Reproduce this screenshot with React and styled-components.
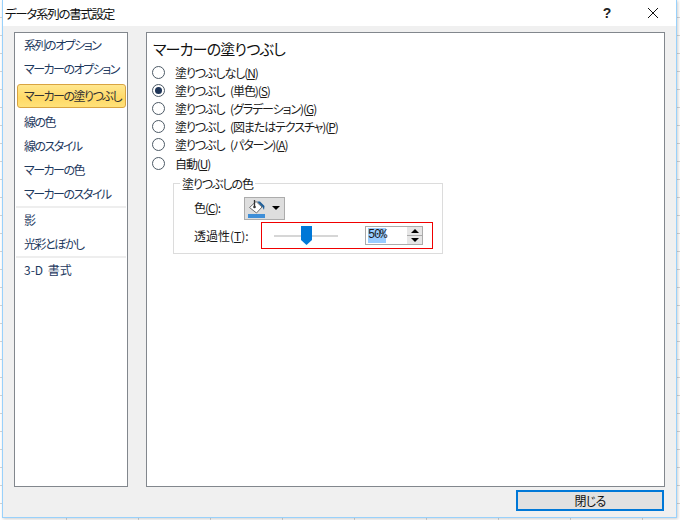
import React from 'react'
import styled, { createGlobalStyle } from 'styled-components'

const Global = createGlobalStyle`
    html, body { margin: 0; padding: 0; }
    body {
        width: 680px;
        height: 520px;
        overflow: hidden;
        font-family: "Noto Sans CJK JP", "Liberation Sans", sans-serif;
        font-size: 12px;
        font-feature-settings: "palt";
        color: #1a1a1a;
    }
    u { text-underline-offset: 1px; }
`

const Desktop = styled.div`
    width: 680px;
    height: 520px;
    box-sizing: border-box;
    padding: 0 3px 2px 2px;
    background-color: #fff;
    background-image:
        repeating-linear-gradient(to right, transparent 0 66px, #d4d4d4 66px 67px, transparent 67px 72px),
        repeating-linear-gradient(to bottom, transparent 0 17px, #d4d4d4 17px 18px);
`

const Window = styled.div`
    height: 100%;
    box-sizing: border-box;
    display: flex;
    flex-direction: column;
    background: #f0f0f0;
    border: 1px solid #99d1fb;
    border-top: 0;
    box-shadow: 1px 1px 3px rgba(0, 0, 0, .2);
`

const TitleBar = styled.div`
    height: 26px;
    flex: none;
    display: flex;
    align-items: center;
    background: #fff;
    padding-left: 2px;
    font-size: 12.5px;
    letter-spacing: -1.3px;
    color: #111;
`

const TitleText = styled.div`
    flex: 1;
`

const TitleButton = styled.div`
    width: ${p => p.w}px;
    height: 26px;
    display: flex;
    align-items: center;
    justify-content: center;
    font-family: "Liberation Sans", sans-serif;
    font-size: 14px;
    font-weight: 700;
    letter-spacing: 0;
    color: #222;
`

const Main = styled.div`
    flex: 1;
    min-height: 0;
    display: flex;
    gap: 18px;
    padding: 6px 11px 0 11px;
`

const Panel = styled.div`
    background: #fff;
    border: 1px solid #82878d;
    box-sizing: border-box;
    height: 455px;
`

const Sidebar = styled(Panel)`
    width: 114px;
    flex: none;
    padding: 0 1px 1px;
    display: flex;
    flex-direction: column;
    color: #1e3a5f;
    letter-spacing: -1.5px;
`

const NavItem = styled.div`
    height: 24px;
    line-height: 24px;
    padding-left: 8px;
    flex: none;
    white-space: nowrap;
    ${p => p.wide ? `letter-spacing: 0; word-spacing: 2px;` : ``}
    ${p => p.active ? `
        height: 24px;
        margin: 3px 0 2px 1px;
        border: 1px solid #d9a441;
        border-radius: 3px;
        box-sizing: border-box;
        padding-left: 6px;
        line-height: 22px;
        color: #333;
        background: linear-gradient(to bottom, #ffe78f, #ffd966 60%, #ffe27a);
    ` : ``}
`

const NavSeparator = styled.div`
    height: 2px;
    background: #eeeeee;
    flex: none;
`

const Content = styled(Panel)`
    flex: 1;
    padding: 5px 6px;
`

const Heading = styled.div`
    font-size: 15px;
    line-height: 22px;
    letter-spacing: -0.8px;
    color: #111;
    margin-bottom: 3px;
`

const RadioRow = styled.div`
    height: 18.2px;
    display: flex;
    align-items: center;
    gap: 10px;
    letter-spacing: -1.1px;
    word-spacing: 4px;
    white-space: nowrap;
`

const Radio = styled.span`
    width: 13px;
    height: 13px;
    flex: none;
    box-sizing: border-box;
    border: 1px solid #4d5a66;
    border-radius: 50%;
    background: #fff;
    display: flex;
    align-items: center;
    justify-content: center;
    margin-left: -1px;
    &::after {
        content: '';
        display: ${p => p.checked ? 'block' : 'none'};
        width: 7px;
        height: 7px;
        border-radius: 50%;
        background: #1f3557;
    }
`

const Group = styled.div`
    position: relative;
    width: 270px;
    height: 71px;
    box-sizing: border-box;
    margin: 11px 0 0 20px;
    border: 1px solid #dcdcdc;
    padding: 11px 0 0 20px;
`

const Legend = styled.div`
    position: absolute;
    top: -8px;
    left: 6px;
    background: #fff;
    padding: 0 2px;
    line-height: 15px;
    letter-spacing: -1.1px;
`

const FieldRow = styled.div`
    display: flex;
    align-items: center;
    height: ${p => p.h}px;
    white-space: nowrap;
`

const FieldLabel = styled.div`
    width: ${p => p.w}px;
    flex: none;
    padding-bottom: 2px;
    letter-spacing: ${p => p.tight ? '-1px' : '0'};
`

const DropButton = styled.div`
    width: 41px;
    height: 23px;
    box-sizing: border-box;
    border: 1px solid #acacac;
    background: #dedede;
    display: flex;
    align-items: center;
    gap: 7px;
    padding-left: 3px;
`

const Caret = styled.span`
    width: 0;
    height: 0;
    border-left: 4px solid transparent;
    border-right: 4px solid transparent;
    border-top: 4px solid #000;
`

const RedBox = styled.div`
    width: 172px;
    height: 27px;
    box-sizing: border-box;
    border: 1px solid #f00000;
    display: flex;
    align-items: center;
    margin-top: -1px;
    padding-left: 12px;
`

const Slider = styled.div`
    position: relative;
    width: 64px;
    height: 19px;
    flex: none;
    display: flex;
    align-items: center;
`

const Track = styled.div`
    width: 100%;
    height: 2px;
    background: #d6d6d6;
`

const Thumb = styled.svg`
    position: absolute;
    left: 27px;
    top: 0;
`

const SpinBox = styled.div`
    width: 58px;
    height: 19px;
    box-sizing: border-box;
    border: 1px solid #ababab;
    background: #fff;
    margin-left: 27px;
    display: flex;
    align-items: center;
    justify-content: space-between;
    padding-left: 2px;
`

const Selected = styled.span`
    background: #99ccff;
    line-height: 15px;
    height: 15px;
    font-family: "Liberation Mono", monospace;
    font-size: 12px;
    letter-spacing: -1.2px;
`

const SpinButtons = styled.div`
    width: 15px;
    height: 17px;
    display: flex;
    flex-direction: column;
    gap: 1px;
    background: #aaa;
`

const SpinButton = styled.div`
    flex: 1;
    background: #e6e6e6;
    display: flex;
    align-items: center;
    justify-content: center;
    &::after {
        content: '';
        border-left: 4px solid transparent;
        border-right: 4px solid transparent;
        ${p => p.up ? `border-bottom: 4px solid #000;` : `border-top: 4px solid #000;`}
    }
`

const Footer = styled.div`
    flex: none;
    display: flex;
    justify-content: flex-end;
    padding: 4px 12px 0 0;
    height: 27px;
`

const CloseButton = styled.div`
    width: 148px;
    height: 21px;
    box-sizing: border-box;
    border: 2px solid #0078d7;
    background: #e1e1e1;
    display: flex;
    align-items: center;
    justify-content: center;
    letter-spacing: -0.7px;
    color: #111;
`

const navGroups = [
    ['系列のオプション', 'マーカーのオプション', 'マーカーの塗りつぶし', '線の色', '線のスタイル', 'マーカーの色', 'マーカーのスタイル'],
    ['影', '光彩とぼかし'],
    ['3-D 書式'],
]

const radios = [
    ['塗りつぶしなし(', 'N', ')'],
    ['塗りつぶし (単色)(', 'S', ')'],
    ['塗りつぶし (グラデーション)(', 'G', ')'],
    ['塗りつぶし (図またはテクスチャ)(', 'P', ')'],
    ['塗りつぶし (パターン)(', 'A', ')'],
    ['自動(', 'U', ')'],
]

const BucketIcon = () => (
    <svg width="17" height="19" viewBox="0 0 17 19">
        <path d="M1.5 8.5 L8 2.5 L14 8 L8.5 14 Z" fill="#fff" stroke="#6f6f6f" />
        <path d="M6.5 1 V7" stroke="#333" strokeWidth="1.3" fill="none" />
        <circle cx="6.5" cy="8" r="1.3" fill="#333" />
        <path d="M9 2.5 L12 2.5 L16.5 7 L16 11 L14.5 8 Z" fill="#1f5f99" />
        <rect x="0" y="15" width="17" height="4" fill="#3f8fd8" />
    </svg>
)

export default function App() {
    return (
        <Desktop>
            <Global />
            <Window>
                <TitleBar>
                    <TitleText>データ系列の書式設定</TitleText>
                    <TitleButton w={46}>?</TitleButton>
                    <TitleButton w={46}>
                        <svg width="12" height="12" viewBox="0 0 12 12">
                            <path d="M1 1 L11 11 M11 1 L1 11" stroke="#111" strokeWidth="1" fill="none" />
                        </svg>
                    </TitleButton>
                </TitleBar>
                <Main>
                    <Sidebar>
                        {navGroups.map((group, g) => (
                            <React.Fragment key={g}>
                                {g > 0 && <NavSeparator />}
                                {group.map(item => (
                                    <NavItem key={item} active={item === 'マーカーの塗りつぶし'} wide={item === '3-D 書式'}>{item}</NavItem>
                                ))}
                            </React.Fragment>
                        ))}
                    </Sidebar>
                    <Content>
                        <Heading>マーカーの塗りつぶし</Heading>
                        {radios.map((r, i) => (
                            <RadioRow key={r[1]}>
                                <Radio checked={i === 1} />
                                <span>{r[0]}<u>{r[1]}</u>{r[2]}</span>
                            </RadioRow>
                        ))}
                        <Group>
                            <Legend>塗りつぶしの色</Legend>
                            <FieldRow h={26}>
                                <FieldLabel w={50} tight>色(<u>C</u>):</FieldLabel>
                                <DropButton>
                                    <BucketIcon />
                                    <Caret />
                                </DropButton>
                            </FieldRow>
                            <FieldRow h={30}>
                                <FieldLabel w={67}>透過性(<u>T</u>):</FieldLabel>
                                <RedBox>
                                    <Slider>
                                        <Track />
                                        <Thumb width="11" height="19" viewBox="0 0 11 19">
                                            <path d="M0 0 H11 V14 L5.5 19 L0 14 Z" fill="#0078d7" />
                                        </Thumb>
                                    </Slider>
                                    <SpinBox>
                                        <Selected>50%</Selected>
                                        <SpinButtons>
                                            <SpinButton up />
                                            <SpinButton />
                                        </SpinButtons>
                                    </SpinBox>
                                </RedBox>
                            </FieldRow>
                        </Group>
                    </Content>
                </Main>
                <Footer>
                    <CloseButton>閉じる</CloseButton>
                </Footer>
            </Window>
        </Desktop>
    )
}
